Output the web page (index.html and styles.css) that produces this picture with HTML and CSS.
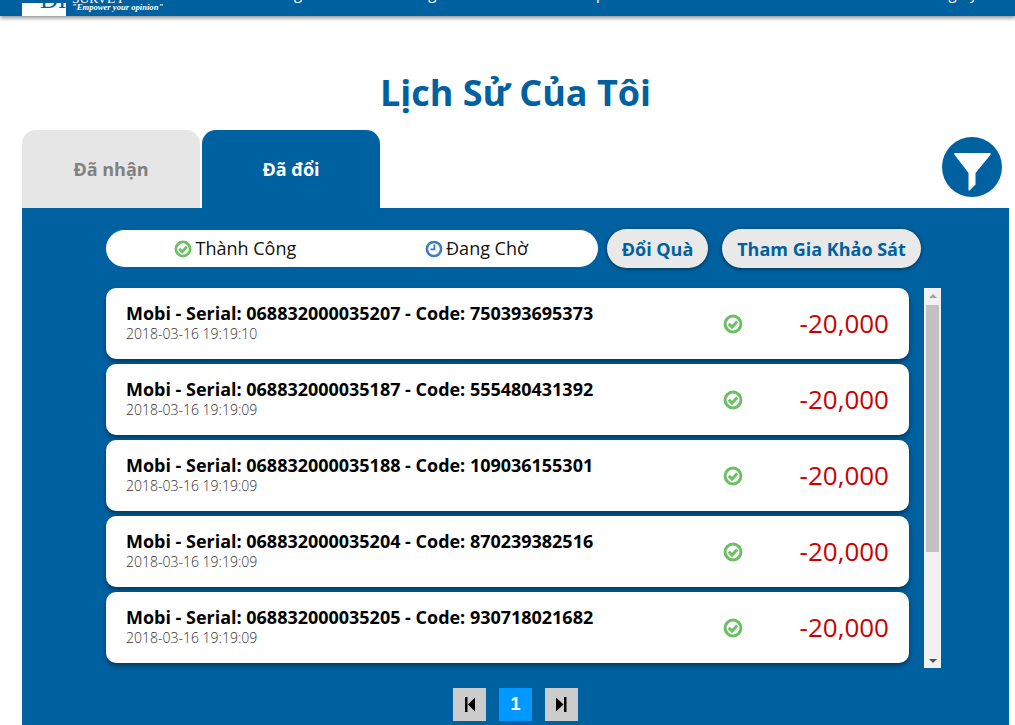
FILE: index.html
```html
<!DOCTYPE html>
<html lang="vi">
<head>
<meta charset="utf-8">
<title>Lịch Sử Của Tôi</title>
<link rel="stylesheet" href="styles.css">
</head>
<body>
<svg class="defs" width="0" height="0" aria-hidden="true">
  <symbol id="ok" viewBox="0 0 20 20">
    <circle cx="10" cy="10" r="7.900" fill="none" stroke="currentColor" stroke-width="3"/>
    <path d="M5.800 9.800l3.200 3.200 5.200-5.500" fill="none" stroke="currentColor" stroke-width="3"/>
  </symbol>
  <symbol id="first" viewBox="0 0 33 33">
    <path d="M12 9h2.500v15H12zM15 16.500l7-7v14z" fill="#000"/>
  </symbol>
  <symbol id="last" viewBox="0 0 33 33">
    <path d="M19 9h2.500v15H19zM18.500 16.500l-7.500-7v14z" fill="#000"/>
  </symbol>
</svg>
<header class="topbar">
  <div class="logo"><span class="logo-mark">DI</span></div>
  <div class="logo-words">
    <span class="logo-name">SURVEY</span>
    <span class="logo-tag">"Empower your opinion"</span>
  </div>
  <nav class="nav">
    <span class="nav-a">Trang Chủ</span>
    <span class="nav-b">Hướng Dẫn</span>
    <span class="nav-c">Giúp Đỡ</span>
    <span class="nav-d">Đăng Ký</span>
  </nav>
</header>
<main class="page">
  <h1 class="title">Lịch Sử Của Tôi</h1>
  <div class="tabs">
    <div class="tab">Đã nhận</div>
    <div class="tab tab-on">Đã đổi</div>
    <div class="filter">
      <svg width="37" height="38" viewBox="0 0 37 38"><path d="M1.500 0h34c1.200 0 1.700 .9 1 1.800L21.500 20v11.500l-5.900 6c-.5 .4-1.100 .1-1.100-.6V20L.5 1.800C-.2 .9 .3 0 1.500 0z" fill="#fff"/></svg>
    </div>
  </div>
  <section class="panel">
    <div class="controls">
      <div class="status">
        <span class="status-item"><svg class="ico green"><use href="#ok"/></svg>Thành Công</span>
        <span class="status-item"><svg class="ico blue" viewBox="0 0 20 20"><circle cx="10" cy="10" r="7.900" fill="none" stroke="currentColor" stroke-width="2.800"/><path d="M10.500 5v5.500H6" fill="none" stroke="currentColor" stroke-width="2"/></svg>Đang Chờ</span>
      </div>
      <button class="pill pill-gift">Đổi Quà</button>
      <button class="pill pill-survey">Tham Gia Khảo Sát</button>
    </div>
    <div class="scroller">
      <div class="list">
        <article class="card">
          <div class="card-text"><div class="card-title">Mobi - Serial: 068832000035207 - Code: 750393695373</div><div class="card-date">2018-03-16 19:19:10</div></div>
          <svg class="card-ico green"><use href="#ok"/></svg>
          <div class="amount">-20,000</div>
        </article>
        <article class="card">
          <div class="card-text"><div class="card-title">Mobi - Serial: 068832000035187 - Code: 555480431392</div><div class="card-date">2018-03-16 19:19:09</div></div>
          <svg class="card-ico green"><use href="#ok"/></svg>
          <div class="amount">-20,000</div>
        </article>
        <article class="card">
          <div class="card-text"><div class="card-title">Mobi - Serial: 068832000035188 - Code: 109036155301</div><div class="card-date">2018-03-16 19:19:09</div></div>
          <svg class="card-ico green"><use href="#ok"/></svg>
          <div class="amount">-20,000</div>
        </article>
        <article class="card">
          <div class="card-text"><div class="card-title">Mobi - Serial: 068832000035204 - Code: 870239382516</div><div class="card-date">2018-03-16 19:19:09</div></div>
          <svg class="card-ico green"><use href="#ok"/></svg>
          <div class="amount">-20,000</div>
        </article>
        <article class="card">
          <div class="card-text"><div class="card-title">Mobi - Serial: 068832000035205 - Code: 930718021682</div><div class="card-date">2018-03-16 19:19:09</div></div>
          <svg class="card-ico green"><use href="#ok"/></svg>
          <div class="amount">-20,000</div>
        </article>
      </div>
      <div class="scrollbar">
        <span class="arrow-up"></span>
        <span class="thumb"></span>
        <span class="arrow-down"></span>
      </div>
    </div>
    <div class="pager">
      <span class="page-btn"><svg width="33" height="33"><use href="#first"/></svg></span>
      <span class="page-btn page-on">1</span>
      <span class="page-btn"><svg width="33" height="33"><use href="#last"/></svg></span>
    </div>
  </section>
</main>
</body>
</html>
```
FILE: styles.css
```css
* { box-sizing: border-box; }
html, body { margin: 0; height: 100%; overflow: hidden; background: #fff; }
body { font-family: "Open Sans", sans-serif; color: #000; }
.defs { position: absolute; }

.topbar {
  height: 16px;
  background: #0061a0;
  box-shadow: 0 2px 4px rgba(0,0,0,.45);
  display: flex;
  align-items: flex-end;
  padding-left: 22px;
  overflow: hidden;
  position: relative;
}
.logo { width: 44px; height: 13px; background: #fff; flex: none; overflow: hidden; position: relative; }
.logo-mark { position: absolute; left: 18px; bottom: 6px; font: 25px/20px "Liberation Serif", serif; color: #0061a0; }
.logo-words { flex: none; width: 96px; margin-left: 5px; height: 16px; position: relative; }
.logo-name { position: absolute; left: 1px; bottom: 10px; font: 13.500px/14px "Liberation Serif", serif; color: #fff; }
.logo-tag { position: absolute; left: 1px; bottom: 3px; font: italic bold 8.600px/11px "Liberation Serif", serif; color: #fff; white-space: nowrap; }
.nav { flex: 1; position: relative; height: 16px; font-size: 15px; color: #fff; }
.nav span { position: absolute; bottom: 13px; line-height: 20px; white-space: nowrap; }
.nav-a { left: 95px; }
.nav-b { left: 222px; }
.nav-c { left: 405px; }
.nav-d { left: 753px; }

.page { padding: 0 6px 0 22px; }
.title {
  margin: 52px 0 0;
  height: 62px;
  text-align: center;
  font-size: 36px;
  line-height: 50px;
  font-weight: 700;
  color: #0061a0;
}
.tabs { display: flex; gap: 2px; height: 78px; position: relative; }
.tab {
  width: 178px;
  background: #e6e6e6;
  border-radius: 14px 14px 0 0;
  color: #808080;
  font-size: 18px;
  font-weight: 700;
  text-align: center;
  padding-top: 26px;
  line-height: 27px;
}
.tab-on { background: #0061a0; color: #fff; }
.filter {
  width: 60px; height: 60px; margin: 7px 7px 0 auto;
  border-radius: 50%;
  background: #0061a0;
  display: flex; align-items: flex-start; justify-content: center;
  padding-top: 16px;
}

.panel { background: #0061a0; height: 517px; padding: 21px 0 0 84px; }
.controls { display: flex; align-items: center; height: 39px; }
.status {
  width: 492px; height: 37px; background: #fff; border-radius: 19px;
  display: flex; justify-content: space-between; font-size: 18px; line-height: 37px; color: #111;
  margin-right: 9px; padding: 0 70px 0 68px;
}
.status-item { display: flex; align-items: center; gap: 3.500px; }
.ico { width: 18px; height: 18px; }
.green { color: #6cbf63; }
.blue { color: #3d7dbd; }
.pill {
  height: 39px; border: 0; border-radius: 20px; background: #e9e9e9;
  font: 700 18px "Open Sans", sans-serif; color: #0061a0;
  box-shadow: 0 1px 4px rgba(0,0,0,.5); padding: 0;
}
.pill-gift { width: 101px; margin-right: 14px; }
.pill-survey { width: 199px; }

.scroller { display: flex; height: 380px; margin-top: 20px; width: 835px; }
.list { width: 803px; display: flex; flex-direction: column; gap: 5px; flex: none; }
.card {
  height: 71px; flex: none; background: #fff; border-radius: 10px;
  box-shadow: 0 3px 5px rgba(0,0,0,.4);
  display: flex; align-items: center; padding: 0 20px;
}
.card-text { flex: 1; padding-bottom: 4px; }
.card-title { font-size: 17.980px; font-weight: 700; line-height: 24px; }
.card-date { font-size: 14px; font-weight: 300; line-height: 18px; color: #333; }
.card-ico { width: 20px; height: 20px; margin-right: 56px; }
.amount { font-size: 26px; font-weight: 400; color: #cc0000; line-height: 36px; width: 90px; text-align: right; white-space: nowrap; margin-bottom: 2px; }

.scrollbar {
  width: 17px; margin-left: 15px; background: #f1f1f1;
  display: flex; flex-direction: column; align-items: center;
  position: relative; padding-top: 17px;
}
.thumb { width: 13px; height: 247px; background: #c1c1c1; }
.arrow-up, .arrow-down { position: absolute; width: 0; height: 0; border-left: 4px solid transparent; border-right: 4px solid transparent; }
.arrow-up { top: 6px; border-bottom: 4px solid #a3a3a3; }
.arrow-down { bottom: 5px; border-top: 4px solid #505050; }

.pager { display: flex; gap: 13px; justify-content: center; margin: 20px 0 0 -84px; width: 987px; }
.page-btn {
  width: 33px; height: 33px; background: #ccc;
  display: flex; align-items: center; justify-content: center;
  font: 700 18px "Liberation Sans", sans-serif; color: #fff;
}
.page-on { background: #0099ff; }
```
